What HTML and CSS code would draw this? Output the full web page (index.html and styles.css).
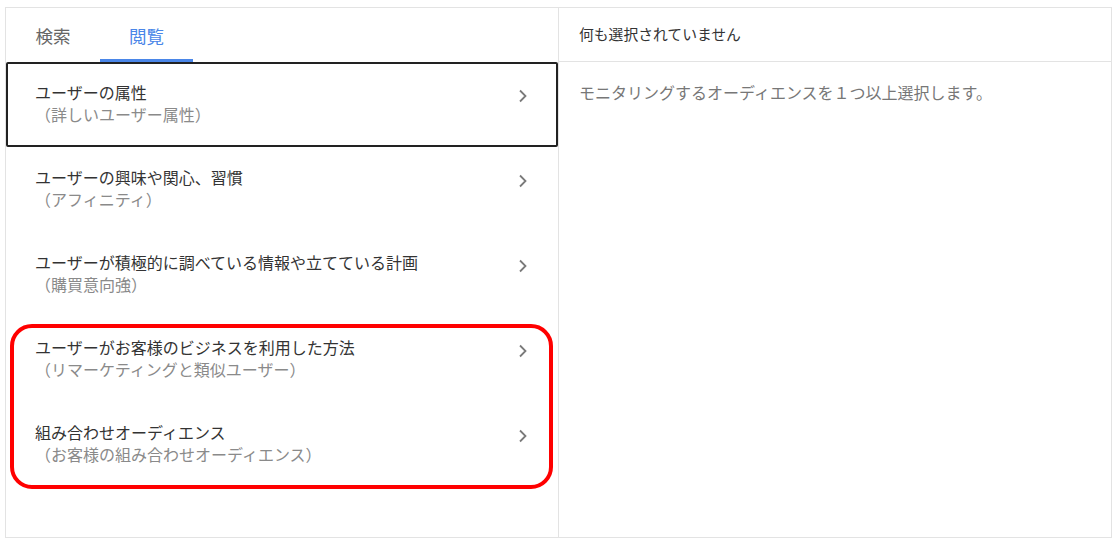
FILE: index.html
```html
<!DOCTYPE html>
<html lang="ja">
<head>
<meta charset="utf-8">
<title>オーディエンス</title>
<link rel="stylesheet" href="styles.css">
</head>
<body>
<div class="panel">
	<div class="left">
		<div class="tabs">
			<div class="tab">検索</div>
			<div class="tab active">閲覧</div>
		</div>
		<div class="list">
			<div class="item selected">
				<div class="txt">
					<p class="title">ユーザーの属性</p>
					<p class="sub">（詳しいユーザー属性）</p>
				</div>
				<svg class="chev" width="10" height="14" viewBox="0 0 10 14"><path d="M2 1.5 L7.5 7 L2 12.5" fill="none" stroke="#7a7a7a" stroke-width="1.8"/></svg>
			</div>
			<div class="item">
				<div class="txt">
					<p class="title">ユーザーの興味や関心、習慣</p>
					<p class="sub">（アフィニティ）</p>
				</div>
				<svg class="chev" width="10" height="14" viewBox="0 0 10 14"><path d="M2 1.5 L7.5 7 L2 12.5" fill="none" stroke="#7a7a7a" stroke-width="1.8"/></svg>
			</div>
			<div class="item">
				<div class="txt">
					<p class="title">ユーザーが積極的に調べている情報や立てている計画</p>
					<p class="sub">（購買意向強）</p>
				</div>
				<svg class="chev" width="10" height="14" viewBox="0 0 10 14"><path d="M2 1.5 L7.5 7 L2 12.5" fill="none" stroke="#7a7a7a" stroke-width="1.8"/></svg>
			</div>
			<div class="group">
				<div class="item">
					<div class="txt">
						<p class="title">ユーザーがお客様のビジネスを利用した方法</p>
						<p class="sub">（リマーケティングと類似ユーザー）</p>
					</div>
					<svg class="chev" width="10" height="14" viewBox="0 0 10 14"><path d="M2 1.5 L7.5 7 L2 12.5" fill="none" stroke="#7a7a7a" stroke-width="1.8"/></svg>
				</div>
				<div class="item">
					<div class="txt">
						<p class="title">組み合わせオーディエンス</p>
						<p class="sub">（お客様の組み合わせオーディエンス）</p>
					</div>
					<svg class="chev" width="10" height="14" viewBox="0 0 10 14"><path d="M2 1.5 L7.5 7 L2 12.5" fill="none" stroke="#7a7a7a" stroke-width="1.8"/></svg>
				</div>
			</div>
		</div>
	</div>
	<div class="right">
		<div class="rhead">何も選択されていません</div>
		<div class="rbody">モニタリングするオーディエンスを１つ以上選択します。</div>
	</div>
</div>
</body>
</html>
```

FILE: styles.css
```css
body{
	margin: 0;
	background: #fff;
	font-family: "Noto Sans CJK JP", "Noto Sans", sans-serif;
}
.panel{
	display: flex;
	width: 1105px;
	height: 529px;
	margin: 7px 0 0 5px;
	border: 1px solid #e3e3e3;
}
.left{
	width: 552px;
	border-right: 1px solid #e3e3e3;
}
.tabs{
	display: flex;
	height: 54px;
}
.tab{
	width: 94px;
	display: flex;
	align-items: center;
	justify-content: center;
	font-size: 17.5px;
	color: #666;
	box-sizing: border-box;
	padding-top: 1px;
}
.tab.active{
	width: 93px;
	color: #4a86e8;
	border-bottom: 3px solid #4a86e8;
	padding-top: 4px;
}
.list p{
	margin: 0;
}
.item{
	display: flex;
	justify-content: space-between;
	align-items: flex-start;
	height: 85px;
	box-sizing: border-box;
	padding: 19px 30px 0 29px;
}
.item.selected{
	border: 2px solid #222;
	border-radius: 2px;
	padding: 17px 28px 0 27px;
}
.title{
	font-size: 16px;
	line-height: 22px;
	color: #333;
}
.sub{
	font-size: 16px;
	line-height: 23px;
	color: #8a8a8a;
}
.chev{
	margin-top: 8px;
}
.group{
	position: relative;
}
.group::after{
	content: "";
	position: absolute;
	top: 7px;
	left: 4px;
	right: 5px;
	bottom: -2px;
	border: 4px solid #f00;
	border-radius: 22px;
}
.right{
	flex: 1;
}
.rhead{
	height: 54px;
	box-sizing: border-box;
	border-bottom: 1px solid #e3e3e3;
	padding: 15px 0 0 20px;
	font-size: 14.8px;
	color: #333;
}
.rbody{
	padding: 18px 0 0 20px;
	font-size: 16px;
	color: #777;
}
```
